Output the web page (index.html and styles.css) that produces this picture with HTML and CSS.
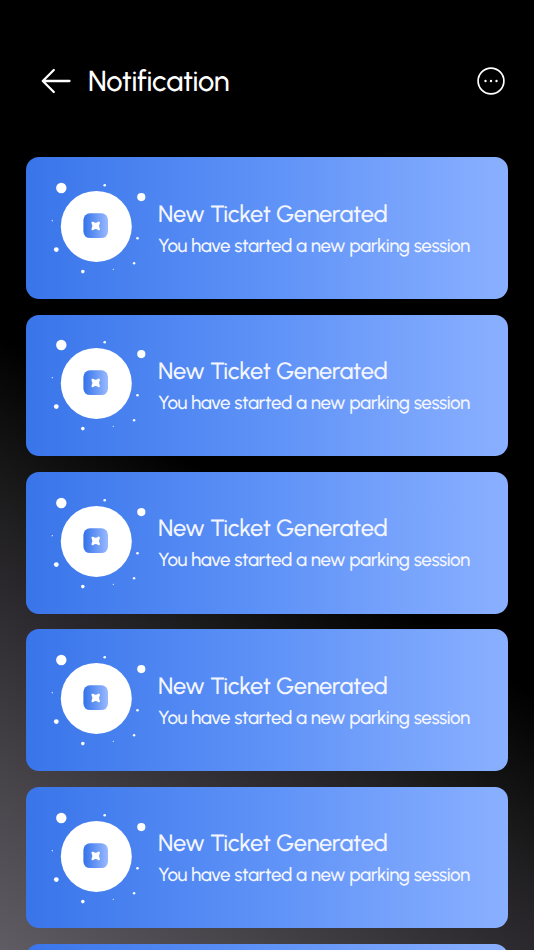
FILE: index.html
```html
<!DOCTYPE html>
<html lang="en">
<head>
  <meta charset="UTF-8">
  <meta name="viewport" content="width=device-width, initial-scale=1.0">
  <title>Notification</title>
  <link rel="stylesheet" href="styles.css">
</head>
<body>
  <!-- Shared ticket illustration -->
  <svg class="defs" width="0" height="0">
    <defs>
      <linearGradient id="badge" x1="0" y1="0" x2="1" y2="0">
        <stop offset="0" stop-color="#3372ea"/>
        <stop offset="1" stop-color="#9abaff"/>
      </linearGradient>
      <symbol id="ticket" viewBox="0 0 104 102">
        <g fill="#fff">
          <circle cx="50.3" cy="49.4" r="35.5"/>
          <circle cx="15.3" cy="11" r="5.2"/>
          <circle cx="58.7" cy="8.2" r="1.3"/>
          <circle cx="95.3" cy="20.1" r="4.1"/>
          <circle cx="6.3" cy="43.7" r="0.6"/>
          <circle cx="10.3" cy="72.6" r="2.4"/>
          <circle cx="36.8" cy="94.6" r="1.8"/>
          <circle cx="67.3" cy="92.3" r="0.6"/>
          <circle cx="88.1" cy="86.2" r="1.2"/>
          <circle cx="91.5" cy="61.3" r="1.3"/>
        </g>
        <rect x="37.4" y="36.3" width="24.6" height="24.8" rx="6.6" fill="url(#badge)"/>
        <path d="M46.6 45.8Q49.7 48 52.8 45.8Q50.8 48.9 52.8 52Q49.7 49.8 46.6 52Q48.6 48.9 46.6 45.8Z" fill="#fff" stroke="#fff" stroke-width="2.3" stroke-linejoin="round"/>
      </symbol>
    </defs>
  </svg>

  <header class="header">
    <svg class="back" viewBox="0 0 30 26" fill="none" stroke="#fff" stroke-width="2.3" stroke-linecap="round" stroke-linejoin="round">
      <path d="M28.5 13H1.8M12.8 2 1.8 13l11 11"/>
    </svg>
    <h1>Notification</h1>
    <svg class="more" viewBox="0 0 28 28">
      <circle cx="14" cy="14" r="12.9" fill="none" stroke="#fff" stroke-width="1.7"/>
      <circle cx="8.5" cy="14" r="1.2" fill="#fff"/>
      <circle cx="14" cy="14" r="1.2" fill="#fff"/>
      <circle cx="19.5" cy="14" r="1.2" fill="#fff"/>
    </svg>
  </header>

  <main class="list">
    <div class="card">
      <svg class="art"><use href="#ticket"/></svg>
      <div class="text">
        <h2>New Ticket Generated</h2>
        <p>You have started a new parking session</p>
      </div>
    </div>
    <div class="card">
      <svg class="art"><use href="#ticket"/></svg>
      <div class="text">
        <h2>New Ticket Generated</h2>
        <p>You have started a new parking session</p>
      </div>
    </div>
    <div class="card">
      <svg class="art"><use href="#ticket"/></svg>
      <div class="text">
        <h2>New Ticket Generated</h2>
        <p>You have started a new parking session</p>
      </div>
    </div>
    <div class="card">
      <svg class="art"><use href="#ticket"/></svg>
      <div class="text">
        <h2>New Ticket Generated</h2>
        <p>You have started a new parking session</p>
      </div>
    </div>
    <div class="card">
      <svg class="art"><use href="#ticket"/></svg>
      <div class="text">
        <h2>New Ticket Generated</h2>
        <p>You have started a new parking session</p>
      </div>
    </div>
    <div class="card next"></div>
  </main>
</body>
</html>
```
FILE: styles.css
```css
* {
  box-sizing: border-box;
}
body {
  margin: 0;
  height: 950px;
  overflow: hidden;
  font-family: "Urbanist", "Lato", sans-serif;
  text-rendering: geometricPrecision;
  color: #fff;
  background: linear-gradient(214deg, #000 53%, #1b1b1c 65%, #2d2a2f 73%, #605c63 100%);
}
.defs {
  display: block;
}
.header {
  display: flex;
  align-items: center;
  height: 157.2px;
  padding: 5px 29px 0 41px;
}
.back {
  width: 30px;
  height: 26px;
}
h1 {
  flex: 1;
  margin: 2px 0 0 17px;
  font-size: 29px;
  font-weight: 500;
  letter-spacing: -0.3px;
  line-height: 34px;
}
.more {
  width: 28px;
  height: 28px;
}
.list {
  display: flex;
  flex-direction: column;
  gap: 15.7px;
  height: 792.8px;
  padding: 0 26px;
  overflow: hidden;
}
.card {
  display: flex;
  flex-shrink: 0;
  align-items: center;
  height: 141.7px;
  padding-left: 20px;
  border-radius: 13px;
  background: linear-gradient(90deg, #3975ea, #5e92f7 50%, #8ab0ff);
}
.art {
  width: 104px;
  height: 102px;
}
.text {
  margin: 2px 0 0 8px;
  color: #f4f6ff;
  white-space: nowrap;
}
h2 {
  margin: 0;
  font-size: 23.7px;
  font-weight: 500;
  letter-spacing: -0.25px;
  line-height: 32px;
}
p {
  margin: 0;
  font-size: 18.8px;
  font-weight: 500;
  letter-spacing: -0.38px;
  line-height: 31px;
}
```
